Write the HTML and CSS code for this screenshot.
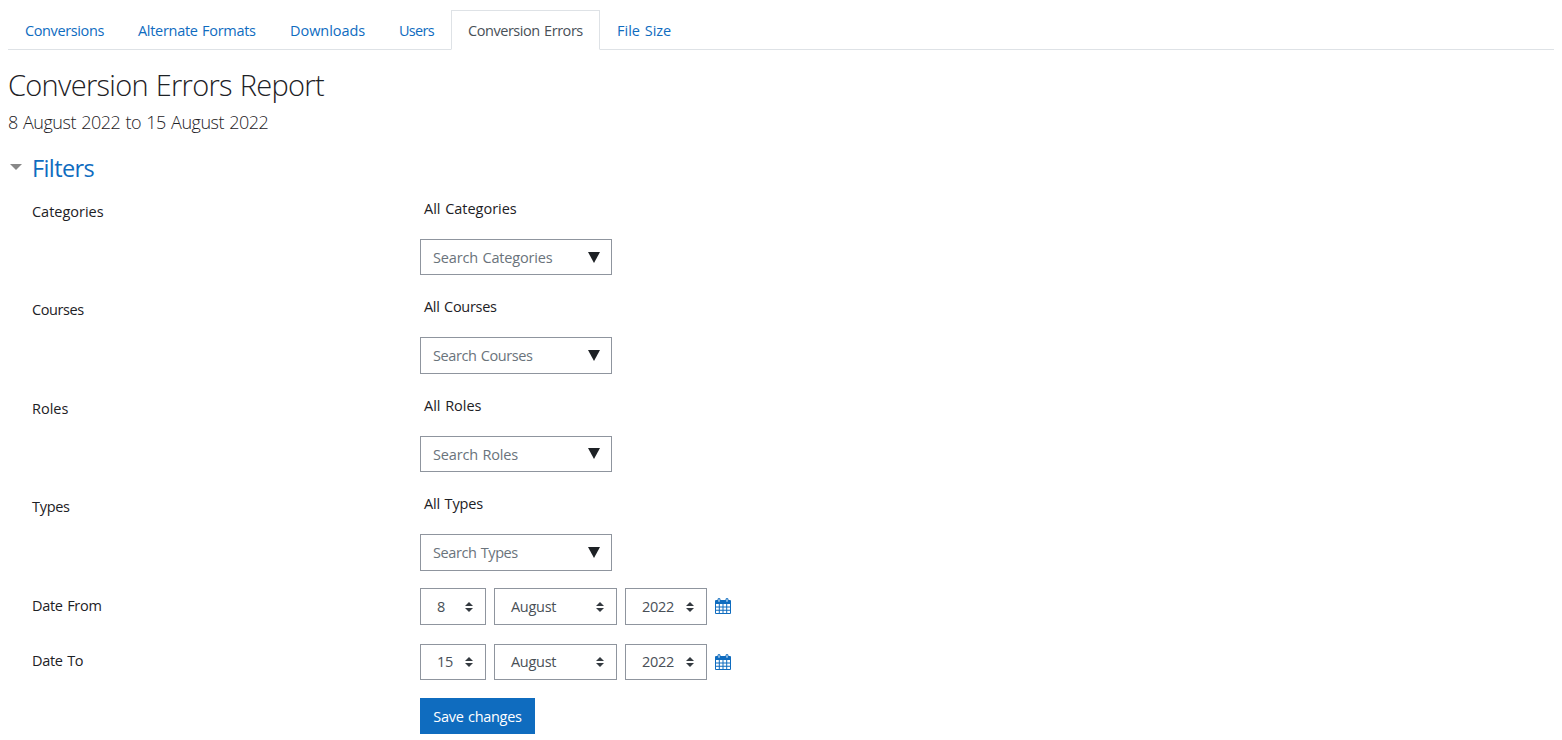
FILE: index.html
```html
<!DOCTYPE html>
<html lang="en">
<head>
    <meta charset="UTF-8">
    <meta name="viewport" content="width=device-width, initial-scale=1.0">
    <title>Conversion Errors Report</title>
    <link rel="stylesheet" href="styles.css">
</head>
<body>
    <svg class="sprite" width="0" height="0">
        <symbol id="calendar" viewBox="0 0 16 16">
            <path fill="currentColor" fill-rule="evenodd" d="M0 3q0-1 1-1h1.500V1.500Q2.500 0 4 0t1.500 1.500V2h5v-.5Q10.500 0 12 0t1.500 1.500V2H15q1 0 1 1v12q0 1-1 1H1q-1 0-1-1zM3.500 1.200v2.600h1V1.200zM11.500 1.200v2.600h1V1.200zM1 6v2.500h2.800V6zm3.800 0v2.500h2.700V6zm3.700 0v2.500h2.700V6zm3.700 0v2.500H15V6zM1 9.500v2.300h2.800V9.500zm3.800 0v2.300h2.700V9.500zm3.700 0v2.300h2.700V9.500zm3.700 0v2.300H15V9.500zM1 12.700V15h2.800v-2.300zm3.800 0V15h2.700v-2.300zm3.700 0V15h2.700v-2.300zm3.700 0V15H15v-2.300z"/>
        </symbol>
        <symbol id="sort" viewBox="0 0 8 10">
            <path fill="#343a40" d="M4 0L0 4h8zM0 6l4 4 4-4z"/>
        </symbol>
        <symbol id="down" viewBox="0 0 12 11">
            <path fill="#1d2125" d="M0 0h12L6 11z"/>
        </symbol>
    </svg>

    <ul class="nav-tabs">
        <li><a class="nav-link conversions" href="#">Conversions</a></li>
        <li><a class="nav-link formats" href="#">Alternate Formats</a></li>
        <li><a class="nav-link downloads" href="#">Downloads</a></li>
        <li><a class="nav-link users" href="#">Users</a></li>
        <li><a class="nav-link errors active" href="#">Conversion Errors</a></li>
        <li><a class="nav-link size" href="#">File Size</a></li>
    </ul>

    <h2>Conversion Errors Report</h2>
    <h4>8 August 2022 to 15 August 2022</h4>

    <form class="filters">
        <div class="legend">
            <svg class="caret" viewBox="0 0 12 6"><path fill="#888" d="M0 0h12L6 6z"/></svg>
            <a href="#">Filters</a>
        </div>

        <div class="row">
            <label class="wide">Categories</label>
            <div class="field">
                <span class="selection wide">All Categories</span>
                <div class="search"><span class="medium">Search Categories</span><svg class="down"><use href="#down"/></svg></div>
            </div>
        </div>
        <div class="row">
            <label class="narrow">Courses</label>
            <div class="field">
                <span class="selection">All Courses</span>
                <div class="search"><span class="narrow">Search Courses</span><svg class="down"><use href="#down"/></svg></div>
            </div>
        </div>
        <div class="row">
            <label class="wide">Roles</label>
            <div class="field">
                <span class="selection wide">All Roles</span>
                <div class="search"><span class="medium">Search Roles</span><svg class="down"><use href="#down"/></svg></div>
            </div>
        </div>
        <div class="row">
            <label>Types</label>
            <div class="field">
                <span class="selection medium">All Types</span>
                <div class="search"><span class="narrow">Search Types</span><svg class="down"><use href="#down"/></svg></div>
            </div>
        </div>

        <div class="row date">
            <label>Date From</label>
            <div class="selects">
                <div class="select day"><span>8</span><svg class="sort"><use href="#sort"/></svg></div>
                <div class="select month"><span>August</span><svg class="sort"><use href="#sort"/></svg></div>
                <div class="select year"><span>2022</span><svg class="sort"><use href="#sort"/></svg></div>
                <a class="calendar" href="#"><svg><use href="#calendar"/></svg></a>
            </div>
        </div>
        <div class="row date">
            <label>Date To</label>
            <div class="selects">
                <div class="select day"><span>15</span><svg class="sort"><use href="#sort"/></svg></div>
                <div class="select month"><span>August</span><svg class="sort"><use href="#sort"/></svg></div>
                <div class="select year"><span>2022</span><svg class="sort"><use href="#sort"/></svg></div>
                <a class="calendar" href="#"><svg><use href="#calendar"/></svg></a>
            </div>
        </div>

        <button type="button" class="btn">Save changes</button>
    </form>
</body>
</html>
```

FILE: styles.css
```css
* {
    box-sizing: border-box;
}
body {
    font-family: "Segoe UI", "Open Sans", "Noto Sans", sans-serif;
    font-size: 14.5px;
    line-height: 22.5px;
    letter-spacing: -0.3px;
    word-spacing: 1px;
    color: #1d2125;
    background-color: #fff;
    margin: 0;
    padding: 10px 8px 0;
}
a {
    color: #0f6cbf;
    text-decoration: none;
}
.sprite {
    position: absolute;
}
.nav-tabs {
    display: flex;
    height: 40px;
    margin: 0;
    padding: 0;
    list-style: none;
    border-bottom: 1px solid #dee2e6;
}
.nav-link {
    display: block;
    height: 40px;
    padding: 9px 0 0 16px;
    border: 1px solid transparent;
    white-space: nowrap;
}
.nav-link.active {
    color: #495057;
    background-color: #fff;
    border-color: #dee2e6 #dee2e6 #fff;
}
.conversions {
    width: 113px;
    letter-spacing: -0.38px;
}
.formats {
    width: 152px;
}
.downloads {
    width: 109px;
    letter-spacing: -0.05px;
}
.users {
    width: 69px;
    letter-spacing: -0.7px;
}
.errors {
    width: 149px;
    letter-spacing: -0.45px;
}
.size {
    letter-spacing: 0;
}
h2 {
    margin: 17px 0 0;
    font-size: 29px;
    font-weight: 300;
    line-height: 36px;
    letter-spacing: -0.7px;
}
h4 {
    margin: 7px 0 0;
    font-size: 18px;
    font-weight: 300;
    line-height: 24px;
    letter-spacing: -0.48px;
}
.legend {
    display: flex;
    align-items: center;
    height: 30px;
    margin-top: 19px;
    font-size: 23.5px;
    letter-spacing: -0.6px;
}
.caret {
    width: 12px;
    height: 6px;
    margin: 0 10px 3px 2px;
}
.filters {
    margin: 0;
}
.row {
    display: flex;
    height: 82px;
    margin-bottom: 16.45px;
}
.legend + .row {
    margin-top: 10.35px;
}
label {
    width: 412px;
    padding: 7.6px 0 0 24px;
}
.wide {
    letter-spacing: -0.02px;
}
.medium {
    letter-spacing: -0.17px;
}
.narrow {
    letter-spacing: -0.42px;
}
.selection {
    display: block;
    height: 45.5px;
    padding: 4.6px 4px 0;
}
.search {
    display: flex;
    justify-content: space-between;
    align-items: center;
    width: 192px;
    height: 36.5px;
    padding: 0 11px 0 12px;
    border: 1px solid #8f959e;
    color: #6a737b;
}
.search span {
    padding-top: 1.8px;
}
.down {
    width: 12px;
    height: 11px;
}
.row.date {
    height: 38px;
    margin-bottom: 17.4px;
}
.date label {
    padding-top: 7.8px;
}
.selects {
    display: flex;
    align-items: flex-start;
    gap: 8px;
    padding-top: 1.2px;
}
.select {
    display: flex;
    justify-content: space-between;
    align-items: center;
    height: 36.5px;
    padding: 0 12px 0 16px;
    border: 1px solid #8f959e;
    color: #495057;
}
.select span {
    padding-top: 1.4px;
}
.sort {
    width: 8px;
    height: 10px;
}
.day {
    width: 66px;
}
.month {
    width: 123px;
}
.year {
    width: 82px;
}
.calendar {
    padding-top: 10px;
}
.calendar svg {
    display: block;
    width: 16px;
    height: 16px;
}
.btn {
    display: block;
    width: 115px;
    height: 36px;
    margin-left: 412px;
    padding: 2px 0 0;
    border: none;
    background-color: #0f6cbf;
    color: #fff;
    font: inherit;
    letter-spacing: inherit;
    word-spacing: inherit;
}
```
